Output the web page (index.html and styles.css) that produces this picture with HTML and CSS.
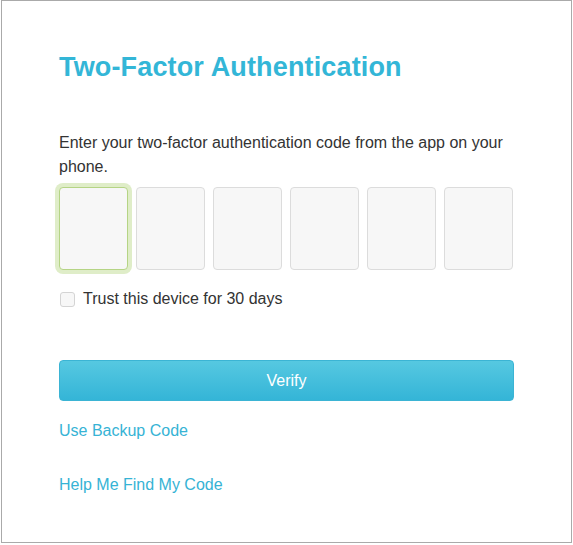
FILE: index.html
```html
<!DOCTYPE html>
<html lang="en">
<head>
  <meta charset="UTF-8">
  <meta name="viewport" content="width=device-width, initial-scale=1.0">
  <title>Two-Factor Authentication</title>
  <link rel="stylesheet" href="styles.css">
</head>
<body>
  <div class="card">
    <h1>Two-Factor Authentication</h1>

    <p class="intro">Enter your two-factor authentication code from the app on your phone.</p>

    <!-- Kodefelt, ett siffer per boks -->
    <div class="code-row">
      <input class="code-box focused" type="text" maxlength="1">
      <input class="code-box" type="text" maxlength="1">
      <input class="code-box" type="text" maxlength="1">
      <input class="code-box" type="text" maxlength="1">
      <input class="code-box" type="text" maxlength="1">
      <input class="code-box" type="text" maxlength="1">
    </div>

    <label class="trust">
      <input type="checkbox" class="trust-check">
      Trust this device for 30 days
    </label>

    <button class="verify">Verify</button>

    <a class="link link-backup" href="#">Use Backup Code</a>
    <a class="link link-help" href="#">Help Me Find My Code</a>
  </div>
</body>
</html>
```

FILE: styles.css
```css
/* Generelle stiler */
* { box-sizing: border-box; }
body {
  margin: 0;
  padding: 0;
  font-family: "Liberation Sans", Arial, sans-serif;
  background-color: #fff;
  color: #333;
}
.card {
  margin-left: 1px;
  width: 571px;
  height: 543px;
  border: 1px solid #aaa;
  padding: 50px 57px 0 57px;
  display: flex;
  flex-direction: column;
  align-items: flex-start;
}
h1 {
  margin: 0;
  font-size: 27px;
  line-height: 32px;
  font-weight: bold;
  letter-spacing: 0.15px;
  color: #33b6d7;
}
.intro {
  margin: 48px 0 0;
  font-size: 16px;
  line-height: 24px;
}
.code-row {
  margin-top: 8px;
  display: flex;
  gap: 8px;
  width: 100%;
}
.code-box {
  width: 69px;
  height: 83px;
  border: 1px solid #dcdcdc;
  border-radius: 4px;
  background-color: #f7f7f7;
  font-size: 28px;
  text-align: center;
  outline: none;
}
.code-box.focused {
  border-color: #b5d485;
  box-shadow: 0 0 0 4px #dfedc8;
}
.trust {
  margin-top: 17px;
  display: flex;
  align-items: center;
  font-size: 16px;
  line-height: 24px;
}
.trust-check {
  appearance: none;
  -webkit-appearance: none;
  width: 15px;
  height: 15px;
  margin: 0 8px 0 1px;
  border: 1px solid #d4d4d4;
  border-radius: 3px;
  background-color: #f7f7f7;
}
.verify {
  margin-top: 49px;
  padding-top: 2px;
  width: 100%;
  height: 41px;
  border: 1px solid #3bb4d4;
  border-radius: 4px;
  background: linear-gradient(#56c8e1, #34b5d7);
  color: #fff;
  font-family: inherit;
  font-size: 16px;
  cursor: pointer;
}
.link {
  font-size: 16px;
  line-height: 24px;
  color: #36b3d5;
  text-decoration: none;
}
.link-backup {
  margin-top: 18px;
}
.link-help {
  margin-top: 30px;
}
```
